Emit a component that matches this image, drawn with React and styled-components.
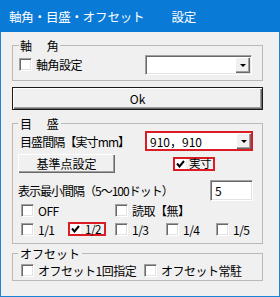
import React from "react";
import styled, { createGlobalStyle } from "styled-components";

const GlobalStyle = createGlobalStyle`
  html, body {
    margin: 0;
    padding: 0;
    background: #ffffff;
  }
  body {
    font-family: "Noto Sans CJK JP", "Noto Sans", sans-serif;
    font-size: 12px;
    color: #000;
  }
`;

const Window = styled.div`
  width: 280px;
  height: 297px;
  box-sizing: border-box;
  display: flex;
  flex-direction: column;
  background: #f0f0f0;
  border: 1px solid #1883d7;
  border-top: none;
`;

const TitleBar = styled.div`
  height: 32px;
  margin: 0 -1px;
  padding-left: 9px;
  display: flex;
  align-items: center;
  background: #0a7ad7;
  color: #fff;
  font-size: 12.5px;
  letter-spacing: -0.2px;
  white-space: pre;
`;

const Body = styled.div`
  display: flex;
  flex-direction: column;
  padding: 7px 16px 0 11px;
`;

const Group = styled.fieldset`
  margin: ${p => p.$mt || 0}px 0 0 0;
  padding: ${p => p.$pad};
  height: ${p => p.$h}px;
  box-sizing: border-box;
  min-width: 0;
  border: 1px solid #b9b9b9;
  display: flex;
  flex-direction: column;
`;

const Legend = styled.legend`
  padding: 0 ${p => p.$px || 2}px;
  font-size: 12px;
  line-height: 13px;
  white-space: pre;
`;

const Row = styled.div`
  display: flex;
  align-items: ${p => p.$align || "center"};
  height: ${p => p.$h}px;
  margin-top: ${p => p.$mt || 0}px;
`;

const Label = styled.span`
  margin-left: ${p => p.$ml || 0}px;
  line-height: 13px;
  letter-spacing: ${p => p.$ls || -0.5}px;
  white-space: nowrap;
`;

const CheckLabel = styled.label`
  display: flex;
  align-items: center;
  gap: 4px;
  height: 14px;
  margin-top: ${p => p.$mt || 0}px;
  line-height: 13px;
  letter-spacing: -0.5px;
  white-space: nowrap;
  grid-column: ${p => p.$col || "auto"};
`;

const Box = styled.span`
  width: 13px;
  height: 13px;
  box-sizing: border-box;
  background: #fff;
  border-top: 1px solid #a0a0a0;
  border-left: 1px solid #a0a0a0;
  border-right: 1px solid #ffffff;
  border-bottom: 1px solid #ffffff;
  box-shadow: inset 1px 1px #696969, inset -1px -1px #e3e3e3;
  flex: none;
`;

const RedCheckLabel = styled.label`
  display: flex;
  align-items: center;
  gap: ${p => p.$gap}px;
  height: 14px;
  width: ${p => p.$w}px;
  margin-left: ${p => p.$ml || 0}px;
  box-sizing: border-box;
  border: 2px solid #dc1c24;
  white-space: nowrap;
  grid-column: ${p => p.$col || "auto"};
`;

const RedText = styled.span`
  font-size: 11.5px;
  line-height: 10px;
  letter-spacing: -0.5px;
  margin-top: -1px;
`;

const RedBox = styled.span`
  width: 11px;
  height: 10px;
  background: #fff;
  display: flex;
  align-items: center;
  justify-content: center;
  flex: none;
`;

const CheckMark = () => (
  <svg width="9" height="8" viewBox="0 0 9 8">
    <path d="M1 3.5 L3.5 6.5 L8 1" fill="none" stroke="#000" strokeWidth="2" />
  </svg>
);

const Combo = styled.div`
  width: ${p => p.$w}px;
  height: 20px;
  margin-left: auto;
  box-sizing: border-box;
  display: flex;
  align-items: stretch;
  background: #fff;
  ${p =>
    p.$red
      ? `border: 2px solid #dc1c24;`
      : `border-top: 1px solid #a0a0a0;
         border-left: 1px solid #a0a0a0;
         border-right: 1px solid #fff;
         border-bottom: 1px solid #fff;
         box-shadow: inset 1px 1px #696969, inset -1px -1px #e3e3e3;
         padding: 1px;`}
`;

const ComboText = styled.span`
  flex: 1;
  padding-left: 3px;
  display: flex;
  align-items: center;
  line-height: 13px;
`;

const DropButton = styled.span`
  width: 15px;
  background: #f0f0f0;
  display: flex;
  align-items: center;
  justify-content: center;
  box-shadow: inset 1px 1px #ffffff, inset -1px -1px #696969,
    inset -2px -2px #a0a0a0;
  &::after {
    content: "";
    border-left: 3px solid transparent;
    border-right: 3px solid transparent;
    border-top: 3px solid #000;
  }
`;

const OkButton = styled.button`
  margin-top: 6px;
  height: 23px;
  width: 251px;
  padding: 0;
  font: inherit;
  line-height: 13px;
  background: #f0f0f0;
  border: 1px solid #1a1a1a;
  box-shadow: inset 1px 1px #ffffff, inset -1px -1px #696969,
    inset -2px -2px #a0a0a0;
`;

const PushButton = styled.button`
  width: 97px;
  height: 19px;
  padding: 0;
  font: inherit;
  line-height: 13px;
  background: #f0f0f0;
  border: none;
  box-shadow: inset 1px 1px #ffffff, inset -1px -1px #696969,
    inset -2px -2px #a0a0a0;
`;

const TextBox = styled.div`
  width: 43px;
  height: 21px;
  margin-left: auto;
  box-sizing: border-box;
  padding-left: 4px;
  display: flex;
  align-items: center;
  background: #fff;
  border-top: 1px solid #a0a0a0;
  border-left: 1px solid #a0a0a0;
  border-right: 1px solid #fff;
  border-bottom: 1px solid #fff;
  box-shadow: inset 1px 1px #696969, inset -1px -1px #e3e3e3;
`;

const CheckGrid = styled.div`
  display: grid;
  grid-template-columns: ${p => p.$cols};
  row-gap: 5px;
  margin-left: 3px;
  margin-top: ${p => p.$mt || 0}px;
`;

const Check = ({ checked, children, col, mt }) => (
  <CheckLabel $col={col} $mt={mt}>
    <Box>{checked && <CheckMark />}</Box>
    <span>{children}</span>
  </CheckLabel>
);

const RedCheck = ({ children, w, ml, gap, col }) => (
  <RedCheckLabel $w={w} $ml={ml} $gap={gap} $col={col}>
    <RedBox>
      <CheckMark />
    </RedBox>
    <RedText>{children}</RedText>
  </RedCheckLabel>
);

export default function App() {
  return (
    <>
      <GlobalStyle />
      <Window>
        <TitleBar>軸角・目盛・オフセット　　 設定</TitleBar>
        <Body>
          <Group $h={42} $pad="3px 10px 0 6px">
            <Legend $px={1}>軸　 角</Legend>
            <Row $h={20} $align="flex-start">
              <Check mt={2}>軸角設定</Check>
              <Combo $w={107}>
                <ComboText />
                <DropButton />
              </Combo>
            </Row>
          </Group>

          <OkButton>Ok</OkButton>

          <Group $mt={7} $h={127} $pad="1px 9px 0 5px">
            <Legend>目　 盛</Legend>
            <Row $h={20}>
              <Label $ml={2} $ls={-0.9}>目盛間隔【実寸mm】</Label>
              <Combo $w={108} $red>
                <ComboText>910，910</ComboText>
                <DropButton />
              </Combo>
            </Row>
            <Row $h={19} $mt={3}>
              <PushButton>基準点設定</PushButton>
              <RedCheck w={42} ml={58} gap={3}>実寸</RedCheck>
            </Row>
            <Row $h={21} $mt={7}>
              <Label $ls={-1}>表示最小間隔（5～100ドット）</Label>
              <TextBox>5</TextBox>
            </Row>
            <CheckGrid $mt={2} $cols="47px 47px 51px 50px auto">
              <Check col="1">OFF</Check>
              <Check col="3 / span 3">読取【無】</Check>
              <Check>1/1</Check>
              <RedCheck w={38} ml={0} gap={4}>1/2</RedCheck>
              <Check>1/3</Check>
              <Check>1/4</Check>
              <Check>1/5</Check>
            </CheckGrid>
          </Group>

          <Group $mt={3} $h={34} $pad="3px 9px 0 5px">
            <Legend>オフセット</Legend>
            <CheckGrid $cols="123px auto">
              <Check>オフセット1回指定</Check>
              <Check>オフセット常駐</Check>
            </CheckGrid>
          </Group>
        </Body>
      </Window>
    </>
  );
}
